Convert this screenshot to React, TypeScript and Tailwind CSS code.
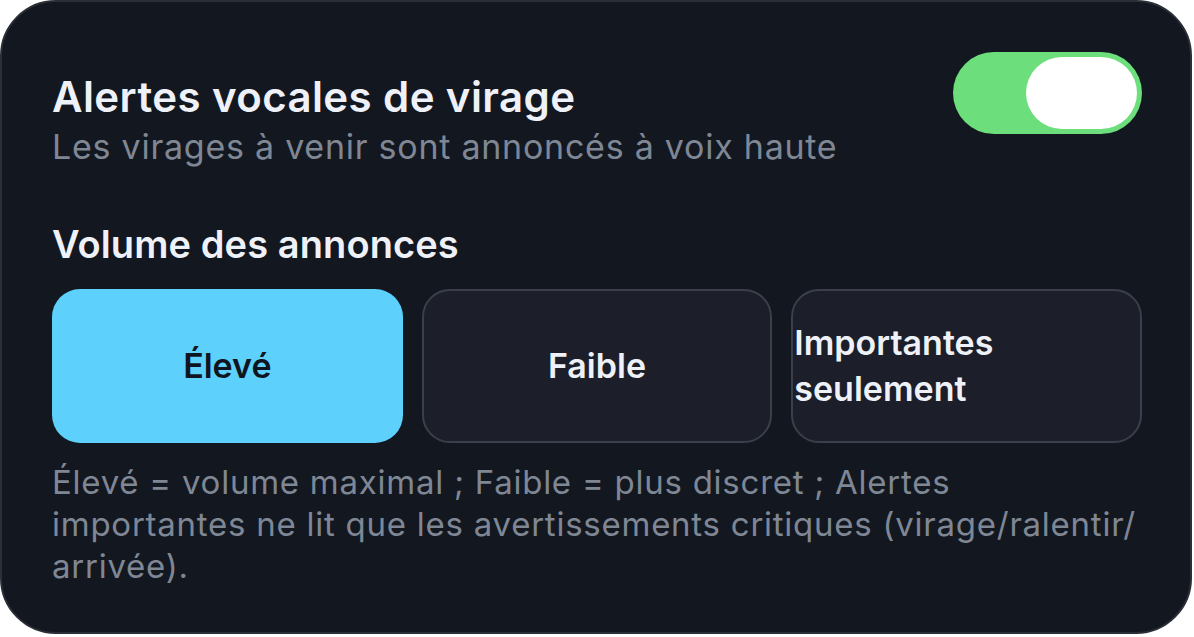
import { useState } from 'react'

const options = [
  { id: 'high', label: 'Élevé' },
  { id: 'low', label: 'Faible' },
  { id: 'critical', label: 'Importantes seulement' },
]

export default function App() {
  const [enabled, setEnabled] = useState(true)
  const [volume, setVolume] = useState('high')

  return (
    <div className="h-[637px] w-[1194px] bg-white font-['Inter','Noto_Sans',sans-serif]">
      <div className="h-[634px] w-[1192px] rounded-[56px] border-2 border-[#2a2e37] bg-[#131720] pl-[50px] pr-[48px] pt-[48px]">
        <div className="flex items-start justify-between">
          <div className="pt-[23px]">
            <h2 className="text-[42px] font-semibold leading-[48px] tracking-[0.4px] text-[#eef1f7]">
              Alertes vocales de virage
            </h2>
            <p className="mt-[6px] text-[34px] leading-[40px] tracking-[0.75px] text-[#7f8795]">
              Les virages à venir sont annoncés à voix haute
            </p>
          </div>
          <button
            onClick={() => setEnabled(!enabled)}
            className="mt-[2px] flex h-[82px] w-[189px] items-center rounded-full bg-[#6cde7b] px-[5px]"
          >
            <span
              className={`h-[72px] w-[111px] rounded-full bg-white ${enabled ? 'ml-auto' : ''}`}
            />
          </button>
        </div>

        <h3 className="mt-[53px] text-[38px] font-semibold leading-[48px] tracking-[0.1px] text-[#eef1f7]">
          Volume des annonces
        </h3>

        <div className="mt-[21px] grid grid-cols-3 gap-[19px]">
          {options.map((opt) => {
            const active = volume === opt.id
            return (
              <button
                key={opt.id}
                onClick={() => setVolume(opt.id)}
                className={`flex h-[154px] items-center rounded-[28px] text-[34px] font-semibold leading-[46px] ${
                  active
                    ? 'bg-[#5dd1fc] text-[#0f1520]'
                    : 'border-2 border-[#3a3f4b] bg-[#1c1f29] text-[#eef1f7]'
                } ${opt.id === 'critical' ? 'justify-start pl-px text-left' : 'justify-center'}`}
              >
                <span>{opt.label}</span>
              </button>
            )
          })}
        </div>

        <p className="mt-[18px] text-[33px] leading-[42px] tracking-[0.75px] text-[#7f8795]">
          Élevé = volume maximal ; Faible = plus discret ; Alertes importantes ne lit que les
          avertissements critiques (virage/ralentir/
          <wbr />
          arrivée).
        </p>
      </div>
    </div>
  )
}
